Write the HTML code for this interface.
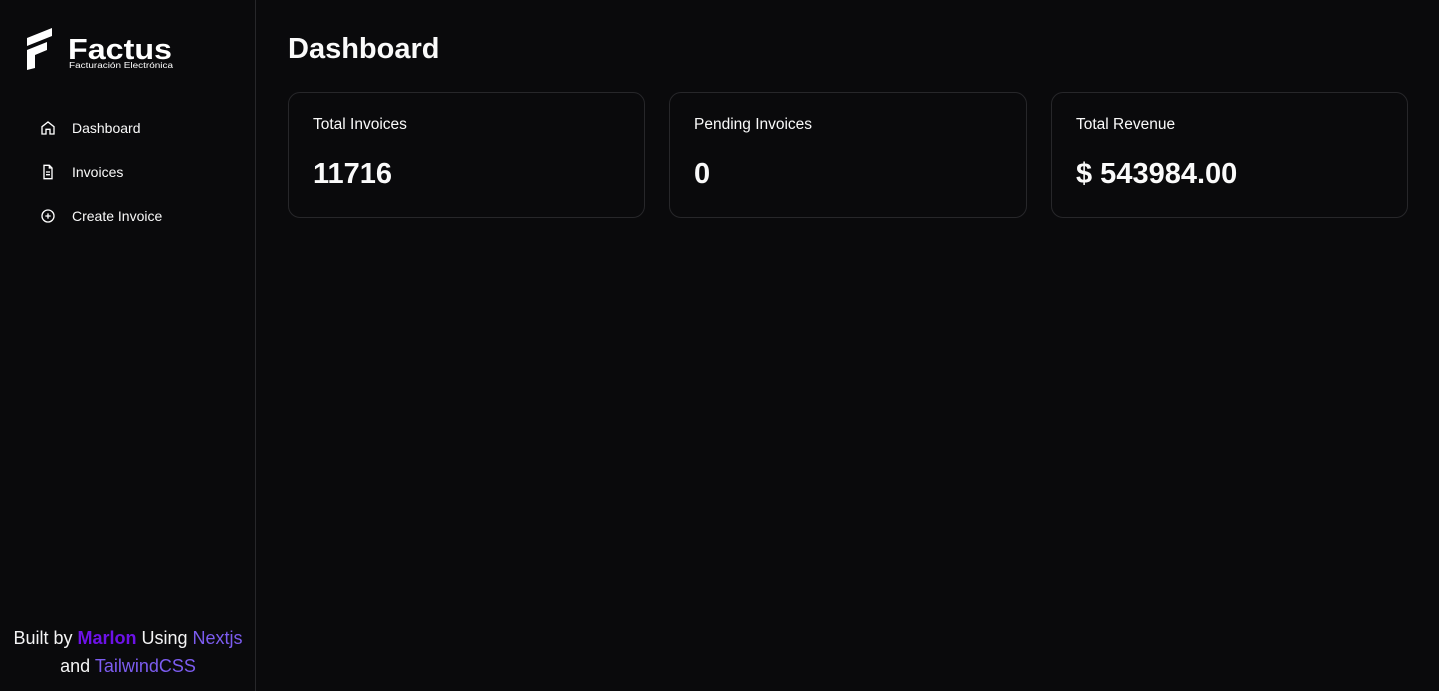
<!DOCTYPE html>
<html><head><meta charset="utf-8"><style>
*{margin:0;padding:0;box-sizing:border-box}
body{width:1439px;height:691px;background:#0a0a0c;color:#fafafa;font-family:"Liberation Sans","DejaVu Sans",sans-serif;position:relative;overflow:hidden}
.side{position:absolute;left:0;top:0;width:256px;height:691px;border-right:1px solid #27272a}
.logo{position:absolute;left:25px;top:26px}
.nav{position:absolute;left:40px;font-size:14px;display:flex;align-items:center}
.nav svg{margin-right:16px}
.foot{position:absolute;left:0;width:256px;top:624px;text-align:center;font-size:18px;line-height:28px;color:#f4f4f5}
h1{position:absolute;left:288px;top:33px;font-size:29px;font-weight:bold}
.card{position:absolute;top:92px;height:126px;border:1px solid #27272a;border-radius:12px}
.card .t{position:absolute;left:24px;top:23px;font-size:15.5px}
.card .v{position:absolute;left:24px;top:65px;font-size:29px;font-weight:bold}
</style></head><body>
<div class="side">
<div class="logo">
<svg width="150" height="45" viewBox="0 0 150 45">
<path d="M2 12 L27 2 L27 10 L2 20Z M2 24 L22 16 L22 24 L10 29 L10 42 L2 44Z" fill="#fff"/>
<text x="43" y="33" textLength="104" lengthAdjust="spacingAndGlyphs" font-family="Liberation Sans,sans-serif" font-weight="bold" font-size="29" fill="#fff">Factus</text>
<text x="44" y="42" textLength="104" lengthAdjust="spacingAndGlyphs" font-family="Liberation Sans,sans-serif" font-size="8" fill="#fff">Facturación Electrónica</text>
</svg></div>
<div class="nav" style="top:120px"><svg width="16" height="16" viewBox="0 0 24 24" fill="none" stroke="#fff" stroke-width="2"><path d="M3 10 L12 3 L21 10 V21 H15 V14 H9 V21 H3Z"/></svg>Dashboard</div>
<div class="nav" style="top:164px"><svg width="16" height="16" viewBox="0 0 24 24" fill="none" stroke="#fff" stroke-width="2"><path d="M14 2H6v20h12V6z M14 2v4h4 M9 12h6 M9 16h6"/></svg>Invoices</div>
<div class="nav" style="top:208px"><svg width="16" height="16" viewBox="0 0 24 24" fill="none" stroke="#fff" stroke-width="2"><circle cx="12" cy="12" r="9"/><path d="M12 8v8M8 12h8"/></svg>Create Invoice</div>
<div class="foot">Built by <b style="color:#6d12e8">Marlon</b> Using <span style="color:#7c5cf0">Nextjs</span><br>and <span style="color:#7c5cf0">TailwindCSS</span></div>
</div>
<h1>Dashboard</h1>
<div class="card" style="left:288px;width:357px"><div class="t">Total Invoices</div><div class="v">11716</div></div>
<div class="card" style="left:669px;width:358px"><div class="t">Pending Invoices</div><div class="v">0</div></div>
<div class="card" style="left:1051px;width:357px"><div class="t">Total Revenue</div><div class="v">$ 543984.00</div></div>
</body></html>
